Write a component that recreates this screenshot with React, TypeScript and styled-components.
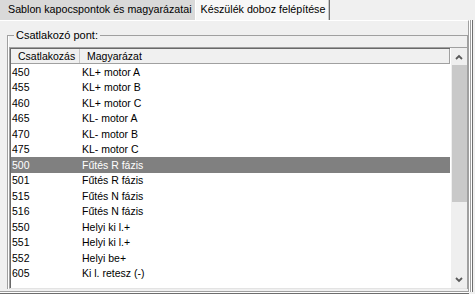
import styled, { createGlobalStyle } from "styled-components";

const GlobalStyle = createGlobalStyle`
  html, body {
    margin: 0;
    padding: 0;
    background: #f0f0f0;
  }
  body {
    font-family: "Liberation Sans", Arial, sans-serif;
    color: #000;
  }
`;

export const Window = styled.div`
  width: 475px;
  height: 294px;
  overflow: hidden;
  display: flex;
  flex-direction: column;
  background: #f0f0f0;
`;

export const TabStrip = styled.div`
  display: flex;
  height: 20px;
  flex-shrink: 0;
`;

export const Tab = styled.div<{ $active?: boolean }>`
  display: flex;
  align-items: center;
  padding: ${({ $active }) => ($active ? "0 3px 2px 8px" : "0 4px 2px 5px")};
  height: 18px;
  font-size: 10.7px;
  white-space: nowrap;
  background: ${({ $active }) => ($active ? "#d9d9d9" : "#f7f7f7")};
  border-right: 1px solid ${({ $active }) => ($active ? "#ffffff" : "#6d6d6d")};
  box-shadow: ${({ $active }) =>
    $active ? "none" : "inset -1px 0 0 #c8c8c8"};
`;

export const Panel = styled.div`
  flex: 1;
  min-height: 0;
  width: 469px;
  display: flex;
  flex-direction: column;
  padding: 8px 0 2px 7px;
  box-sizing: border-box;
  border-top: 1px solid #ffffff;
  border-right: 1px solid #a0a0a0;
  border-bottom: 1px solid #a0a0a0;
  box-shadow: 1px 0 0 #ffffff, 2px 0 0 #a0a0a0, 3px 0 0 #ffffff,
    4px 0 0 #6d6d6d, 0 1px 0 #ffffff, 0 2px 0 #6d6d6d;
  margin-bottom: 2px;
`;

export const GroupBox = styled.fieldset`
  margin: 0;
  padding: 5px 0 0 1px;
  flex: 1;
  min-height: 0;
  display: flex;
  border: 1px solid #a0a0a0;
  border-bottom: none;
  box-shadow: inset 1px 0 0 #ffffff;
`;

export const Legend = styled.legend`
  font-size: 11px;
  line-height: 13px;
  padding: 0 2px;
  margin-left: 5px;
`;

export const ListView = styled.div`
  flex: 1;
  display: flex;
  border-top: 1px solid #a0a0a0;
  border-left: 1px solid #a0a0a0;
  border-bottom: 1px solid #e3e3e3;
  box-shadow: inset 1px 1px 0 #696969;
  background: #ffffff;
  overflow: hidden;
`;

export const ListBody = styled.div`
  flex: 1;
  display: flex;
  flex-direction: column;
  padding-left: 1px;
  padding-top: 1px;
`;

export const HeaderRow = styled.div`
  display: grid;
  grid-template-columns: 69px 1fr;
  height: 14px;
  flex-shrink: 0;
  background: #f0f0f0;
  border-bottom: 1px solid #a0a0a0;
  border-right: 1px solid #a0a0a0;
  font-size: 10.5px;
`;

export const HeaderCell = styled.div`
  display: flex;
  align-items: center;
  padding-left: 7px;
  border-right: 1px solid #c8c8c8;

  &:last-child {
    border-right: none;
  }
`;

export const Row = styled.div<{ $selected?: boolean }>`
  display: grid;
  grid-template-columns: 70px 1fr;
  height: 15.5px;
  flex-shrink: 0;
  align-items: center;
  font-size: 10.5px;
  background: ${({ $selected }) => ($selected ? "#808080" : "transparent")};
  color: ${({ $selected }) => ($selected ? "#ffffff" : "#000000")};
`;

export const Cell = styled.div`
  padding-left: 1px;
  white-space: nowrap;
`;

export const ScrollBar = styled.div`
  width: 16px;
  flex-shrink: 0;
  display: flex;
  flex-direction: column;
  align-items: center;
  background: #efefef;
  border-left: 1px solid #ffffff;
  padding-top: 1px;
`;

export const ArrowButton = styled.div`
  height: 16px;
  width: 15px;
  display: flex;
  align-items: center;
  justify-content: center;
  flex-shrink: 0;
`;

export const Thumb = styled.div`
  width: 15px;
  height: 137px;
  background: #c9c9c9;
  flex-shrink: 0;
`;

export const Track = styled.div`
  flex: 1;
`;

const Chevron = ({ up }: { up?: boolean }) => (
  <svg width="8" height="6" viewBox="0 0 8 6">
    <path
      d={up ? "M1 5 L4 2 L7 5" : "M1 1 L4 4 L7 1"}
      stroke="#5a5a5a"
      strokeWidth="1.8"
      fill="none"
    />
  </svg>
);

const rows = [
  ["450", "KL+ motor A"],
  ["455", "KL+ motor B"],
  ["460", "KL+ motor C"],
  ["465", "KL- motor A"],
  ["470", "KL- motor B"],
  ["475", "KL- motor C"],
  ["500", "Fűtés R fázis"],
  ["501", "Fűtés R fázis"],
  ["515", "Fűtés N fázis"],
  ["516", "Fűtés N fázis"],
  ["550", "Helyi ki l.+"],
  ["551", "Helyi ki l.+"],
  ["552", "Helyi be+"],
  ["605", "Ki l. retesz (-)"],
];

export default function App() {
  return (
    <>
      <GlobalStyle />
      <Window>
        <TabStrip>
          <Tab $active>Sablon kapocspontok és magyarázatai</Tab>
          <Tab>Készülék doboz felépítése</Tab>
        </TabStrip>
        <Panel>
          <GroupBox>
            <Legend>Csatlakozó pont:</Legend>
            <ListView>
              <ListBody>
                <HeaderRow>
                  <HeaderCell>Csatlakozás</HeaderCell>
                  <HeaderCell>Magyarázat</HeaderCell>
                </HeaderRow>
                {rows.map(([code, label]) => (
                  <Row key={code} $selected={code === "500"}>
                    <Cell>{code}</Cell>
                    <Cell>{label}</Cell>
                  </Row>
                ))}
              </ListBody>
              <ScrollBar>
                <ArrowButton>
                  <Chevron up />
                </ArrowButton>
                <Thumb />
                <Track />
                <ArrowButton>
                  <Chevron />
                </ArrowButton>
              </ScrollBar>
            </ListView>
          </GroupBox>
        </Panel>
      </Window>
    </>
  );
}
